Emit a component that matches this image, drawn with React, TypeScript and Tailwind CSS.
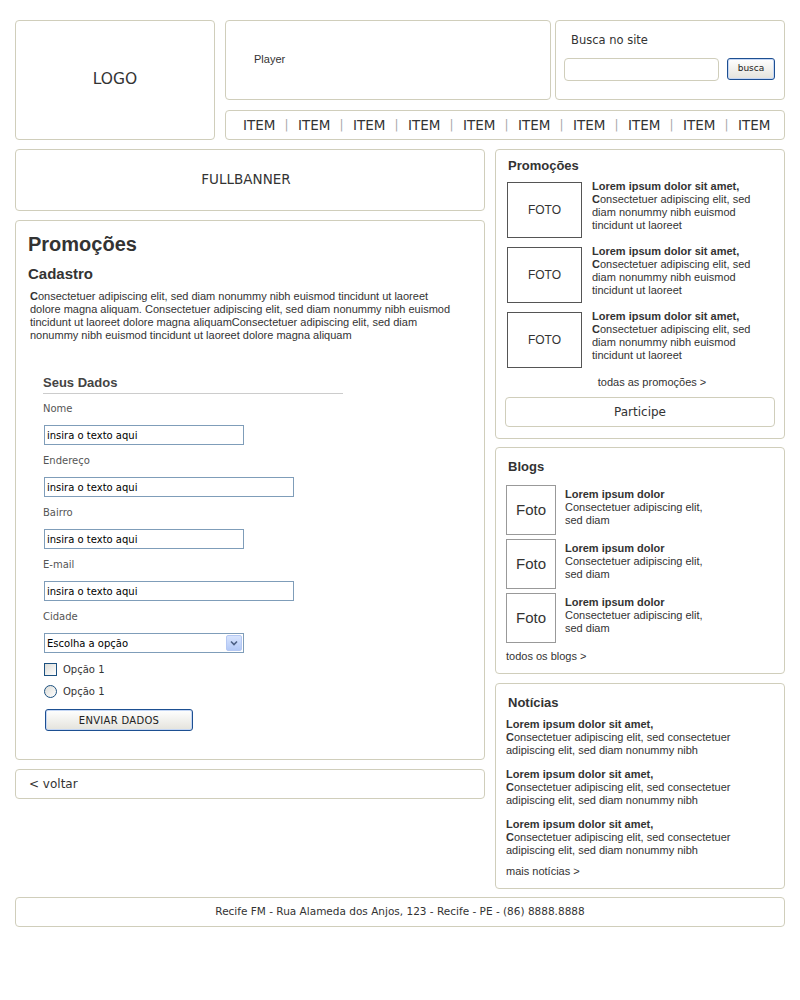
import React from 'react';
import clsx from 'clsx';

const arial = "font-['Liberation_Sans',Arial,sans-serif]";
const verdana = "font-['DejaVu_Sans',Verdana,sans-serif]";

function Box({ className, children }: { className?: string; children?: React.ReactNode }) {
  return (
    <div className={clsx('rounded-[4px] border border-[#d0cebb] bg-white', className)}>{children}</div>
  );
}

function XpButton({ label, className }: { label: string; className?: string }) {
  return (
    <div
      className={clsx(
        'flex items-center justify-center rounded-[3px] border border-[#1d4f91] bg-gradient-to-b from-white to-[#e4e3dc] shadow-[inset_0_0_0_1px_#c4d6f4] text-[#222]',
        verdana,
        className
      )}
    >
      {label}
    </div>
  );
}

function Field({ label, wide }: { label: string; wide?: boolean }) {
  return (
    <div className="flex flex-col">
      <div className={clsx('mt-[8px] h-[14px] leading-[14px] text-[10px] text-[#555]', verdana)}>{label}</div>
      <input
        readOnly
        value="insira o texto aqui"
        className={clsx(
          'mb-[1px] ml-[1px] mt-[9px] h-[20px] border border-[#7f9db9] bg-white px-[2px] text-[10px] text-black outline-none',
          verdana,
          wide ? 'w-[250px]' : 'w-[200px]'
        )}
      />
    </div>
  );
}

const promos = [1, 2, 3];

export default function App() {
  return (
    <div className="min-h-[1000px] w-[800px] bg-white pl-[15px] pt-[20px] text-[#333]">
      <div className="w-[770px]">
        {/* header */}
        <div className="flex gap-[10px]">
          <Box className="flex h-[120px] w-[200px] items-center justify-center">
            <span className={clsx('text-[15.5px] text-[#333]', verdana)}>LOGO</span>
          </Box>
          <div className="flex w-[560px] flex-col gap-[10px]">
            <div className="flex h-[80px] gap-[4px]">
              <Box className="w-[326px] pl-[28px] pt-[31px]">
                <div className={clsx('text-[11px] leading-[14px]', arial)}>Player</div>
              </Box>
              <Box className="w-[230px] pl-[8px] pt-[11px]">
                <div className={clsx('ml-[7px] text-[11.5px] leading-[16px]', verdana)}>Busca no site</div>
                <div className="mt-[10px] flex items-start gap-[8px]">
                  <div className="h-[23px] w-[155px] rounded-[4px] border border-[#d0cebb]" />
                  <XpButton label="busca" className="h-[22px] w-[48px] text-[9px]" />
                </div>
              </Box>
            </div>
            <Box className={clsx('flex h-[30px] items-center pl-[17px] text-[13.5px]', verdana)}>
              {Array.from({ length: 10 }).map((_, i) => (
                <React.Fragment key={i}>
                  {i > 0 && <span className="w-[23px] text-center text-[12px] text-[#aaa]">|</span>}
                  <span className="w-[32px] whitespace-nowrap">ITEM</span>
                </React.Fragment>
              ))}
            </Box>
          </div>
        </div>

        {/* content */}
        <div className="mt-[9px] flex gap-[10px]">
          <div className="flex w-[470px] flex-col gap-[9px]">
            <Box className="flex h-[62px] items-center justify-center pb-[1px] pr-[8px]">
              <span className={clsx('text-[13.5px]', verdana)}>FULLBANNER</span>
            </Box>

            <Box className={clsx('h-[540px] px-[12px] pt-[11px]', arial)}>
              <h1 className="text-[20px] font-bold leading-[24px]">Promoções</h1>
              <h2 className="mt-[9px] text-[15px] font-bold leading-[18px]">Cadastro</h2>
              <p className="ml-[2px] mt-[7px] w-[430px] text-[11px] leading-[13px]">
                <b>C</b>onsectetuer adipiscing elit, sed diam nonummy nibh euismod tincidunt ut laoreet dolore magna
                aliquam. Consectetuer adipiscing elit, sed diam nonummy nibh euismod tincidunt ut laoreet dolore magna
                aliquamConsectetuer adipiscing elit, sed diam nonummy nibh euismod tincidunt ut laoreet dolore magna
                aliquam
              </p>

              <div className="ml-[15px] mt-[33px]">
                <div className="w-[300px] border-b border-[#cccccc] pb-[2px] text-[13px] font-bold leading-[16px] text-[#444]">
                  Seus Dados
                </div>
                <Field label="Nome" />
                <Field label="Endereço" wide />
                <Field label="Bairro" />
                <Field label="E-mail" wide />
                <div className={clsx('mt-[8px] h-[14px] text-[10px] leading-[14px] text-[#555]', verdana)}>Cidade</div>
                <div className="ml-[1px] mt-[9px] flex h-[20px] w-[200px] items-center justify-between border border-[#7f9db9] bg-white pl-[2px] pr-[1px]">
                  <span className={clsx('text-[10px] text-black', verdana)}>Escolha a opção</span>
                  <div className="flex h-[16px] w-[16px] items-center justify-center rounded-[2px] border border-[#b5c8f3] bg-gradient-to-b from-[#d8e4fd] to-[#b3c9f7]">
                    <svg width="8" height="6" viewBox="0 0 8 6">
                      <path d="M1 1.5 L4 4.5 L7 1.5" fill="none" stroke="#4d6185" strokeWidth="1.6" />
                    </svg>
                  </div>
                </div>
                <div className="ml-[1px] mt-[10px] flex h-[13px] items-center gap-[6px]">
                  <div className="h-[13px] w-[13px] border border-[#1c5180] bg-gradient-to-br from-[#dcdcd7] to-white" />
                  <span className={clsx('text-[10px]', verdana)}>Opção 1</span>
                </div>
                <div className="ml-[1px] mt-[9px] flex h-[13px] items-center gap-[6px]">
                  <div className="h-[13px] w-[13px] rounded-full border border-[#1c5180] bg-gradient-to-br from-[#dcdcd7] to-white" />
                  <span className={clsx('text-[10px]', verdana)}>Opção 1</span>
                </div>
                <XpButton label="ENVIAR DADOS" className="ml-[2px] mt-[11px] h-[22px] w-[148px] text-[10px] tracking-[0.3px]" />
              </div>
            </Box>

            <Box className="flex h-[30px] items-center pl-[13px]">
              <span className={clsx('text-[12px]', verdana)}>&lt; voltar</span>
            </Box>
          </div>

          {/* sidebar */}
          <div className={clsx('flex w-[290px] flex-col', arial)}>
            <Box className="h-[290px] px-[9px] pt-[8px]">
              <div className="ml-[3px] text-[13px] font-bold leading-[16px]">Promoções</div>
              <div className="ml-[2px] mt-[8px] flex flex-col gap-[9px]">
                {promos.map((n) => (
                  <div key={n} className="flex items-start gap-[10px]">
                    <div className="flex h-[56px] w-[75px] shrink-0 items-center justify-center border border-[#555] text-[12px]">
                      FOTO
                    </div>
                    <div className="-mt-[2px] flex-1 text-[11px] leading-[13px]">
                      <div className="font-bold">Lorem ipsum dolor sit amet,</div>
                      <div>
                        <b>C</b>onsectetuer adipiscing elit, sed diam nonummy nibh euismod tincidunt ut laoreet
                      </div>
                    </div>
                  </div>
                ))}
              </div>
              <div className="mt-[8px] pl-[24px] text-center text-[11px] leading-[13px]">todas as promoções &gt;</div>
              <div
                className={clsx(
                  'mt-[8px] flex h-[30px] items-center justify-center rounded-[4px] border border-[#d0cebb] text-[12px]',
                  verdana
                )}
              >
                Participe
              </div>
            </Box>

            <Box className="mt-[8px] h-[227px] pl-[10px] pt-[11px]">
              <div className="ml-[2px] text-[13px] font-bold leading-[16px]">Blogs</div>
              <div className="mt-[10px] flex flex-col gap-[4px]">
                {promos.map((n) => (
                  <div key={n} className="flex items-start gap-[9px]">
                    <div className="flex h-[50px] w-[50px] shrink-0 items-center justify-center border border-[#999] text-[15px]">
                      Foto
                    </div>
                    <div className="mt-[3px] w-[150px] text-[11px] leading-[13px]">
                      <div className="font-bold">Lorem ipsum dolor</div>
                      <div>Consectetuer adipiscing elit, sed diam</div>
                    </div>
                  </div>
                ))}
              </div>
              <div className="mt-[7px] text-[11px] leading-[13px]">todos os blogs &gt;</div>
            </Box>

            <Box className="mt-[9px] h-[206px] pl-[10px] pt-[11px]">
              <div className="ml-[2px] text-[13px] font-bold leading-[16px]">Notícias</div>
              <div className="mt-[7px] flex flex-col gap-[11px]">
                {promos.map((n) => (
                  <div key={n} className="w-[270px] text-[11px] leading-[13px]">
                    <div className="font-bold">Lorem ipsum dolor sit amet,</div>
                    <div>
                      <b>C</b>onsectetuer adipiscing elit, sed consectetuer adipiscing elit, sed diam nonummy nibh
                    </div>
                  </div>
                ))}
              </div>
              <div className="mt-[8px] text-[11px] leading-[13px]">mais notícias &gt;</div>
            </Box>
          </div>
        </div>

        {/* footer */}
        <Box className="mt-[8px] flex h-[30px] items-center justify-center">
          <span className={clsx('text-[10.5px]', verdana)}>
            Recife FM - Rua Alameda dos Anjos, 123 - Recife - PE - (86) 8888.8888
          </span>
        </Box>
      </div>
    </div>
  );
}
